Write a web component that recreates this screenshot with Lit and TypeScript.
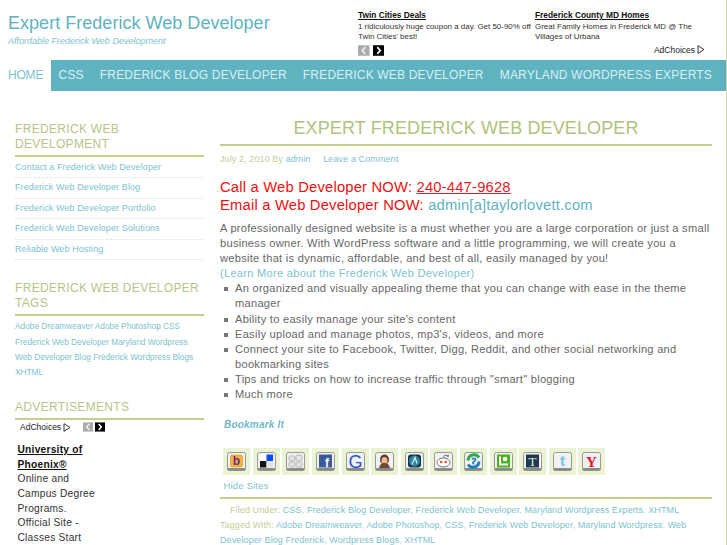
import { LitElement, html, css, svg } from "lit";
import { customElement } from "lit/decorators.js";

const glyphs = [
  svg`<rect x="3.5" y="3" width="12" height="12" rx="2" fill="#f7b43c" stroke="#e08a10" stroke-width=".6"/><text x="9.5" y="13" text-anchor="middle" font-size="12" font-weight="700" font-family="Liberation Sans" fill="#6a2c91">b</text>`,
  svg`<rect x="3" y="2.5" width="6.5" height="6.5" fill="#fff"/><rect x="9.5" y="2.5" width="6.5" height="6.5" fill="#0a4cf0"/><rect x="3" y="9" width="6.5" height="6.5" fill="#111"/><rect x="9.5" y="9" width="6.5" height="6.5" fill="#e4e4e4"/>`,
  svg`<rect x="3" y="4" width="6" height="5" rx="1.5" fill="#e4e4e4" stroke="#b5b5b5"/><rect x="10" y="3" width="6" height="6" rx="1.5" fill="#e4e4e4" stroke="#b5b5b5"/><rect x="3" y="10" width="6" height="5" rx="1.5" fill="#e4e4e4" stroke="#b5b5b5"/><rect x="10" y="10" width="6" height="5" rx="1.5" fill="#e4e4e4" stroke="#b5b5b5"/>`,
  svg`<rect x="3" y="2.5" width="13" height="13" fill="#3b5a9a"/><text x="11" y="15" text-anchor="middle" font-size="12" font-weight="700" font-family="Liberation Sans" fill="#fff">f</text>`,
  svg`<text x="9.5" y="15.5" text-anchor="middle" font-size="18" font-family="Liberation Sans" fill="#2456c8">G</text>`,
  svg`<ellipse cx="9.5" cy="7.5" rx="4.5" ry="5" fill="#5a3a22"/><ellipse cx="9.5" cy="8.5" rx="3" ry="3.6" fill="#eab98c"/><path d="M4 16c1-4 3-5 5.5-5S14 12 15 16z" fill="#6e4a34"/>`,
  svg`<rect x="3" y="2.5" width="13" height="13" rx="3" fill="#16323f"/><circle cx="9.5" cy="9" r="5.5" fill="#2a86a0"/><path d="M7 12.5l3-7 2 6" fill="none" stroke="#d5eef5" stroke-width="1.2"/>`,
  svg`<ellipse cx="9.5" cy="10.5" rx="6.5" ry="4.5" fill="#fff" stroke="#555" stroke-width=".8"/><circle cx="7.2" cy="10" r="1.3" fill="#f04a20"/><circle cx="11.8" cy="10" r="1.3" fill="#f04a20"/><circle cx="14" cy="4" r="1.2" fill="#999"/><path d="M9.5 6 10.5 3 14 4" fill="none" stroke="#666" stroke-width=".8"/>`,
  svg`<path d="M4 8.5a6 6 0 0 1 11-3" fill="none" stroke="#2ea84a" stroke-width="3"/><path d="M15 9.5a6 6 0 0 1-11 3" fill="none" stroke="#1a7fb8" stroke-width="3"/><path d="M8 7.5c1-2 5-1 3 1s-3 2-1 4" fill="none" stroke="#1a7fb8" stroke-width="1.6"/>`,
  svg`<rect x="3" y="2.5" width="13" height="13" fill="#4cb01c"/><circle cx="11" cy="7" r="2.3" fill="#fff"/><path d="M6 4.5v8h8" fill="none" stroke="#fff" stroke-width="2"/>`,
  svg`<rect x="3" y="2.5" width="13" height="13" fill="#1f3a4a"/><text x="9.5" y="14" text-anchor="middle" font-size="13" font-family="Liberation Serif" fill="#e8eef0">T</text>`,
  svg`<text x="9.5" y="14" text-anchor="middle" font-size="15" font-weight="700" font-family="Liberation Sans" fill="#6cc6f2">t</text>`,
  svg`<text x="9.5" y="14.5" text-anchor="middle" font-size="15" font-weight="700" font-family="Liberation Serif" fill="#e8112d">Y</text>`,
];

@customElement("app-root")
export class AppRoot extends LitElement {
  static styles = css`
    :host { display: block; width: 727px; height: 545px; overflow: hidden; background: #fff; font-family: "Liberation Sans", Arial, sans-serif; color: #555; }
    a { color: #7cc3cf; text-decoration: none; }
    .page { width: 726px; height: 545px; border-right: 1px solid #c9d3a4; overflow: hidden; }
    .top { display: flex; height: 60px; }
    .brand { width: 350px; padding: 12px 0 0 8px; box-sizing: content-box; }
    .brand h1 { margin: 0; font-size: 18px; line-height: 23px; font-weight: 400; color: #5fb3c0; letter-spacing: 0.03px; white-space: nowrap; }
    .brand p { margin: 0; font-size: 9px; line-height: 12px; font-style: italic; color: #7cc3cf; }
    .ads { display: grid; grid-template-columns: 177px 170px; grid-template-rows: 33px auto; padding-top: 10px; font-size: 7.95px; line-height: 10.3px; color: #333; }
    .ad b { display: block; font-size: 8.35px; line-height: 11px; color: #111; text-decoration: underline; margin-bottom: 1px; white-space: nowrap; }
    .ad span { display: block; }
    .adrow { display: flex; justify-content: space-between; align-items: center; margin-top: 1px; grid-column: 1 / 3; height: 12px; }
    .arrows { display: flex; gap: 3px; }
    .ar { width: 11.5px; height: 11px; display: block; }
    .choice { display: flex; align-items: center; gap: 2px; font-size: 8.5px; color: #222; }
    nav { display: flex; height: 31px; background: #5fb3c0; }
    nav a { display: block; padding: 0 8px; font-size: 12px; line-height: 30px; color: #d9f0f3; letter-spacing: 0.18px; white-space: nowrap; }
    nav a.home { background: #fff; color: #7cc3cf; padding: 0 7.4px 0 8px; letter-spacing: -0.2px; }
    .cols { display: flex; padding-top: 25px; }
    aside { width: 189px; margin-left: 15px; padding-top: 6px; flex: none; }
    aside h3 { margin: 0; padding-bottom: 3px; border-bottom: 2px solid #c3d08a; font-size: 12px; line-height: 15px; font-weight: 400; color: #b6c586; letter-spacing: 0.32px; }
    aside ul { list-style: none; margin: 0 0 21.5px; padding: 1px 0 0; }
    aside li { height: 19.4px; line-height: 19.4px; border-bottom: 1px dotted #ddd; font-size: 9px; letter-spacing: 0.1px; }
    aside li a { color: #7cc3cf; }
    .tags { margin: 3px 0 20px; font-size: 8.3px; line-height: 15.2px; }
    .adsense { height: 130px; }
    .adhead { display: flex; align-items: center; height: 14px; padding-left: 5px; font-size: 8.5px; color: #222; }
    .adhead .choice { width: 63px; }
    .adhead .arrows { gap: 1.5px; }
    .adhead .ar { width: 10px; height: 10px; }
    .adsense .body { width: 85px; margin: 9px 0 0 2.5px; font-size: 10.2px; line-height: 14.6px; color: #333; letter-spacing: 0.25px; }
    .adsense .body b { display: block; color: #111; text-decoration: underline; }
    main { width: 492px; margin-left: 16px; flex: none; }
    main h2 { margin: 0; padding-bottom: 4px; border-bottom: 2px solid #c3d08a; text-align: center; font-size: 18px; line-height: 24px; font-weight: 400; color: #b0c27c; letter-spacing: 0.12px; }
    .meta { margin-top: 7px; font-size: 9px; line-height: 12px; color: #c3ce98; letter-spacing: 0.1px; }
    .meta a + a { margin-left: 10px; }
    .call { margin-top: 13px; font-size: 14.75px; line-height: 18px; color: #f01010; letter-spacing: 0.2px; }
    .call .phone { color: #e51c1c; text-decoration: underline; }
    .call a { color: #5fb3c0; }
    .txt { margin-top: 7px; font-size: 11.1px; line-height: 15.1px; color: #666; letter-spacing: 0.27px; }
    .txt ul { list-style: none; margin: 0; padding: 0 0 0 15px; }
    .txt li { position: relative; }
    .txt li::before { content: ""; position: absolute; left: -11px; top: 6px; width: 4px; height: 4px; background: #777; }
    .bm { margin: 16px 0 0 4px; font-size: 10px; line-height: 13px; font-weight: 700; font-style: italic; color: #6fbac7; letter-spacing: 0.2px; }
    .tiles { display: flex; gap: 2.6px; margin: 17px 0 0 3.3px; }
    .tile { width: 27px; height: 27px; background: #eaf3d2; display: flex; align-items: center; justify-content: center; }
    .tile svg { width: 19px; height: 19px; display: block; }
    .hide { margin: 4px 0 0 3.5px; font-size: 9.5px; line-height: 13px; letter-spacing: 0.2px; }
    .foot { margin-top: 5px; padding-top: 4px; border-top: 2px solid #c3d08a; font-size: 9.05px; line-height: 15px; color: #c3ce98; letter-spacing: 0.08px; }
    .foot div:first-child { padding-left: 10px; }
  `;

  private arrows() {
    return html`<span class="arrows">
      <svg class="ar" viewBox="0 0 12 11"><rect width="12" height="11" fill="#aaa"/><path d="M7.5 2 4.5 5.5 7.5 9" fill="none" stroke="#eee" stroke-width="1.8"/></svg>
      <svg class="ar" viewBox="0 0 12 11"><rect width="12" height="11" fill="#000"/><path d="M4.5 2 7.5 5.5 4.5 9" fill="none" stroke="#fff" stroke-width="1.8"/></svg>
    </span>`;
  }

  private choice() {
    return html`<span class="choice">AdChoices
      <svg width="8" height="9" viewBox="0 0 8 9"><path d="M1 .7v7.6L7 4.5z" fill="none" stroke="#333"/></svg></span>`;
  }

  render() {
    return html`<div class="page">
      <div class="top">
        <div class="brand">
          <h1>Expert Frederick Web Developer</h1>
          <p>Affordable Frederick Web Development</p>
        </div>
        <div class="ads">
          <div class="ad"><b>Twin Cities Deals</b><span>1 ridiculously huge coupon a day. Get 50-90% off Twin Cities' best!</span></div>
          <div class="ad"><b>Frederick County MD Homes</b><span>Great Family Homes in Frederick MD @ The Villages of Urbana</span></div>
          <div class="adrow">${this.arrows()}${this.choice()}</div>
        </div>
      </div>
      <nav>
        <a class="home" href="#">HOME</a><a href="#">CSS</a><a href="#">FREDERICK BLOG DEVELOPER</a><a href="#">FREDERICK WEB DEVELOPER</a><a href="#">MARYLAND WORDPRESS EXPERTS</a>
      </nav>
      <div class="cols">
        <aside>
          <h3>FREDERICK WEB DEVELOPMENT</h3>
          <ul>
            <li><a href="#">Contact a Frederick Web Developer</a></li>
            <li><a href="#">Frederick Web Developer Blog</a></li>
            <li><a href="#">Frederick Web Developer Portfolio</a></li>
            <li><a href="#">Frederick Web Developer Solutions</a></li>
            <li><a href="#">Reliable Web Hosting</a></li>
          </ul>
          <h3>FREDERICK WEB DEVELOPER TAGS</h3>
          <div class="tags"><a href="#">Adobe Dreamweaver</a> <a href="#">Adobe Photoshop</a> <a href="#">CSS</a> <a href="#">Frederick Web Developer</a> <a href="#">Maryland Wordpress</a> <a href="#">Web Developer Blog</a> <a href="#">Frederick Wordpress Blogs</a> <a href="#">XHTML</a></div>
          <h3>ADVERTISEMENTS</h3>
          <div class="adsense">
            <div class="adhead">${this.choice()}${this.arrows()}</div>
            <div class="body"><b>University of Phoenix®</b>Online and Campus Degree Programs. Official Site - Classes Start</div>
          </div>
        </aside>
        <main>
          <h2>EXPERT FREDERICK WEB DEVELOPER</h2>
          <div class="meta">July 2, 2010 By <a href="#">admin</a> <a href="#">Leave a Comment</a></div>
          <div class="call">Call a Web Developer NOW: <span class="phone">240-447-9628</span><br>Email a Web Developer NOW: <a href="#">admin[a]taylorlovett.com</a></div>
          <div class="txt">A professionally designed website is a must whether you are a large corporation or just a small business owner. With WordPress software and a little programming, we will create you a website that is dynamic, affordable, and best of all, easily managed by you!<br><a href="#">(Learn More about the Frederick Web Developer)</a>
            <ul>
              <li>An organized and visually appealing theme that you can change with ease in the theme manager</li>
              <li>Ability to easily manage your site's content</li>
              <li>Easily upload and manage photos, mp3's, videos, and more</li>
              <li>Connect your site to Facebook, Twitter, Digg, Reddit, and other social networking and bookmarking sites</li>
              <li>Tips and tricks on how to increase traffic through "smart" blogging</li>
              <li>Much more</li>
            </ul>
          </div>
          <div class="bm">Bookmark It</div>
          <div class="tiles">${glyphs.map((g) => html`<div class="tile"><svg viewBox="0 0 19 19"><rect x=".5" y=".5" width="18" height="18" rx="2" fill="#f1f1f1" stroke="#999"/><rect x=".5" y="16" width="18" height="2.5" rx="1" fill="#8a8a8a"/>${g}</svg></div>`)}</div>
          <div class="hide"><a href="#">Hide Sites</a></div>
          <div class="foot">
            <div>Filed Under: <a href="#">CSS</a>, <a href="#">Frederick Blog Developer</a>, <a href="#">Frederick Web Developer</a>, <a href="#">Maryland Wordpress Experts</a>, <a href="#">XHTML</a></div>
            <div>Tagged With: <a href="#">Adobe Dreamweaver</a>, <a href="#">Adobe Photoshop</a>, <a href="#">CSS</a>, <a href="#">Frederick Web Developer</a>, <a href="#">Maryland Wordpress</a>, <a href="#">Web</a> <a href="#">Developer Blog Frederick</a>, <a href="#">Wordpress Blogs</a>, <a href="#">XHTML</a></div>
          </div>
        </main>
      </div>
    </div>`;
  }
}
